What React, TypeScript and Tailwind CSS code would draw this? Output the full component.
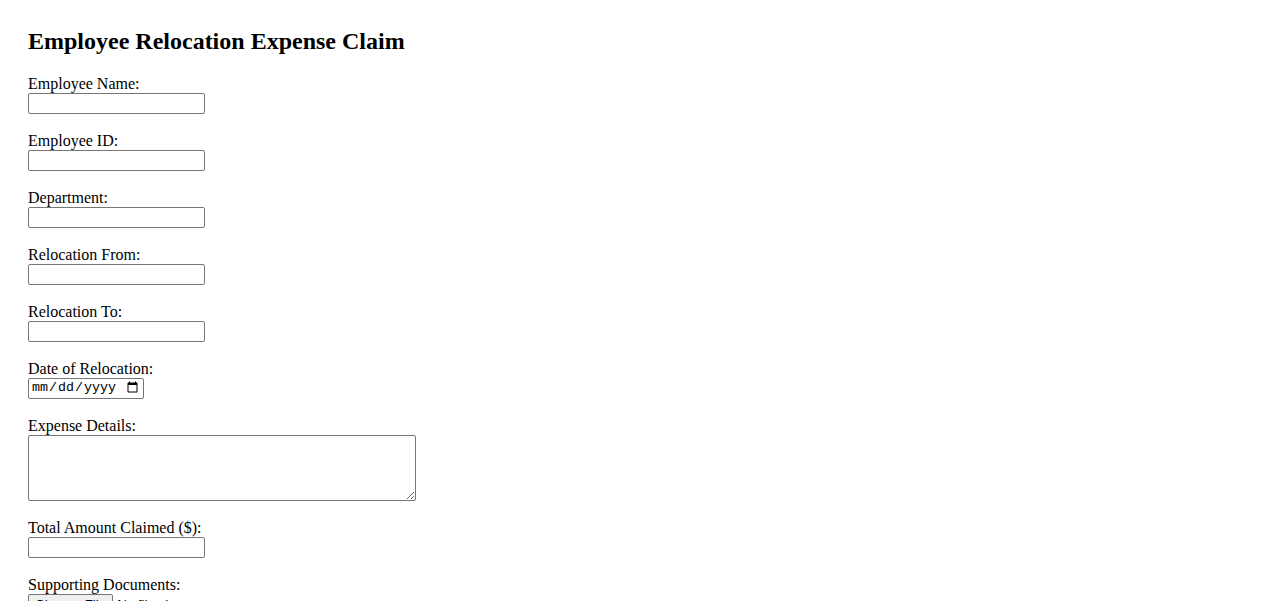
export default function App() {
  const inputCls =
    "block h-[21px] w-[177px] border border-[#767676] rounded-[2px] px-[2px] py-[1px] bg-white text-[13.33px] font-['Liberation_Sans',Arial,sans-serif]";

  const fields = [
    { label: "Employee Name:", type: "text" },
    { label: "Employee ID:", type: "text" },
    { label: "Department:", type: "text" },
    { label: "Relocation From:", type: "text" },
    { label: "Relocation To:", type: "text" },
  ];

  return (
    <div className="min-h-screen bg-white px-[28px] pt-[28px] font-['Liberation_Serif','Times_New_Roman',serif] text-black">
      <h2 className="mb-[19px] text-[24px] font-bold leading-[27.5px]">
        Employee Relocation Expense Claim
      </h2>
      <form>
        {fields.map((f) => (
          <div key={f.label} className="mb-[18px]">
            <label className="block text-[16px] leading-[18px]">{f.label}</label>
            <input type={f.type} className={inputCls} />
          </div>
        ))}

        <div className="mb-[18px]">
          <label className="block text-[16px] leading-[18px]">Date of Relocation:</label>
          <input
            type="date"
            className="block h-[21px] w-[116px] border border-[#767676] rounded-[2px] px-[2px] py-[1px] bg-white text-[13.33px] font-['Liberation_Mono',monospace]"
          />
        </div>

        <div className="mb-[18px]">
          <label className="block text-[16px] leading-[18px]">Expense Details:</label>
          <textarea className="block h-[66px] w-[388px] border border-[#767676] rounded-[2px] px-[2px] py-[2px] bg-white text-[13.33px] font-['Liberation_Mono',monospace]" />
        </div>

        <div className="mb-[18px]">
          <label className="block text-[16px] leading-[18px]">Total Amount Claimed ($):</label>
          <input type="number" className={inputCls} />
        </div>

        <div className="mb-[18px]">
          <label className="block text-[16px] leading-[18px]">Supporting Documents:</label>
          <input
            type="file"
            className="block h-[21px] text-[13.33px] font-['Liberation_Sans',Arial,sans-serif] file:mr-[4px] file:h-[21px] file:rounded-[2px] file:border file:border-[#767676] file:bg-[#efefef] file:px-[6px] file:text-[13.33px]"
          />
        </div>
      </form>
    </div>
  );
}
